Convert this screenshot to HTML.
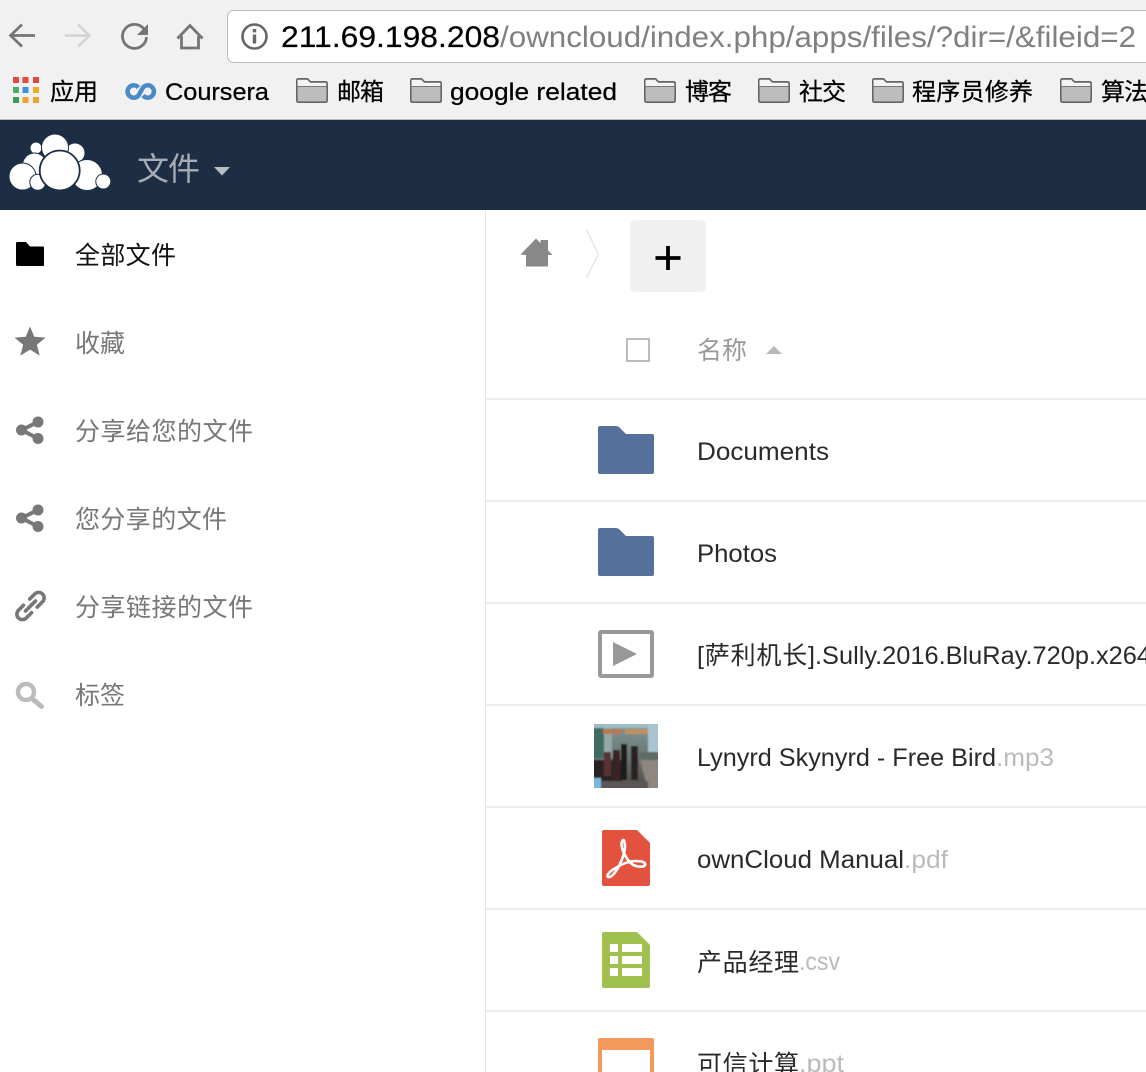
<!DOCTYPE html>
<html><head><meta charset="utf-8"><title>文件 - ownCloud</title>
<style>
html,body{margin:0;padding:0;background:#fff;width:1146px;height:1072px;overflow:hidden}
svg{display:block}
text{font-family:"Liberation Sans","Noto Sans CJK SC",sans-serif}
.bm{font-size:24px;fill:#000;stroke:#000;stroke-width:.25px}
.nav{font-size:25px;fill:#777}
.fn{font-size:25px;fill:#2a2a2a}
.ext{font-size:25px;fill:#bbb}
</style></head><body>
<svg width="1146" height="1072" viewBox="0 0 1146 1072" xmlns="http://www.w3.org/2000/svg">
<defs>
<linearGradient id="sky" x1="0" y1="0" x2="0" y2="1"><stop offset="0" stop-color="#7d9a9c"/><stop offset=".5" stop-color="#6c7672"/><stop offset="1" stop-color="#4a4440"/></linearGradient>
<filter id="soft" x="0" y="0" width="100%" height="100%"><feGaussianBlur stdDeviation=".7"/></filter>
<clipPath id="alb"><rect x="594" y="724" width="64" height="64"/></clipPath>
<g id="bf"><path d="M.8 2.500q0-1.700 1.700-1.700h9l3 3h15q1.700 0 1.700 1.700v17q0 1.700-1.700 1.700h-27q-1.700 0-1.700-1.700z" fill="#bdbdbd" stroke="#666" stroke-width="1.600"/><path d="M1.600 2h9.600l3 3h16v3.500H1.600z" fill="#f4f4f4"/><path d="M1.600 8.500h29" stroke="#777" stroke-width="1"/></g>
<path id="folder" d="M2 0h16q2 0 3.500 1.500L28 8h26q2 0 2 2v36q0 2-2 2H2q-2 0-2-2V2q0-2 2-2z"/>
<g id="share"><circle cx="5.500" cy="13" r="5.500"/><circle cx="22" cy="5" r="5.500"/><circle cx="22" cy="21.500" r="5.500"/><path d="M5.500 13L22 5M5.500 13L22 21.500" stroke="#777" stroke-width="4" fill="none"/></g>
</defs>

<rect width="1146" height="119" fill="#f1f1f1"/>
<rect y="119" width="1146" height="1" fill="#b9b9b9"/>
<rect y="120" width="1146" height="90" fill="#1d2d44"/>

<!-- browser controls -->
<path d="M35 35.500H11M22 24.500L10.500 35.500 22 46.500" fill="none" stroke="#757575" stroke-width="2.700"/>
<path d="M65 35.500H89M78 24.500L89.500 35.500 78 46.500" fill="none" stroke="#d4d4d4" stroke-width="2.700"/>
<path d="M144 29A12 12 0 1 0 146.500 37" fill="none" stroke="#757575" stroke-width="2.800"/>
<path d="M148 24V35H137z" fill="#757575"/>
<path d="M177.500 38.500L190 25.500l12.500 13M181.500 36v12h17V36" fill="none" stroke="#757575" stroke-width="2.800"/>
<rect x="227.500" y="10.500" width="960" height="52" rx="6" fill="#fff" stroke="#bcbcbc"/>
<circle cx="254.500" cy="36.500" r="12" fill="none" stroke="#666" stroke-width="2.600"/>
<rect x="252.800" y="34.500" width="3.400" height="9" fill="#666"/><rect x="252.800" y="29" width="3.400" height="3.400" fill="#666"/>
<text x="281" y="47" font-size="30" fill="#000" stroke="#000" stroke-width=".2" textLength="219" lengthAdjust="spacingAndGlyphs">211.69.198.208</text>
<text x="500" y="47" font-size="30" fill="#808080" textLength="636" lengthAdjust="spacingAndGlyphs">/owncloud/index.php/apps/files/?dir=/&amp;fileid=2</text>

<!-- bookmarks bar -->
<g>
<rect x="13" y="77" width="6" height="6" fill="#e04a3c"/><rect x="22.500" y="77" width="6" height="6" fill="#e04a3c"/><rect x="33" y="77" width="6" height="6" fill="#e04a3c"/>
<rect x="13" y="87" width="6" height="6" fill="#4cae62"/><rect x="22.500" y="87" width="6" height="6" fill="#3f8fe8"/><rect x="33" y="87" width="6" height="6" fill="#f5a623"/>
<rect x="13" y="97" width="6" height="6" fill="#3d9b58"/><rect x="22.500" y="97" width="6" height="6" fill="#f0a030"/><rect x="33" y="97" width="6" height="6" fill="#f0a030"/>
</g>
<text class="bm" x="50" y="100" textLength="48">应用</text>
<path d="M138.500 87.500A6.200 6.200 0 1 0 138.500 95.500L143 87.500A6.200 6.200 0 1 1 143 95.500" fill="none" stroke="#4a8ac9" stroke-width="4.500"/>
<text class="bm" x="165" y="100" textLength="104" lengthAdjust="spacingAndGlyphs">Coursera</text>
<use href="#bf" x="296" y="78"/><text class="bm" x="337" y="100" textLength="47">邮箱</text>
<use href="#bf" x="410" y="78"/><text class="bm" x="450" y="100" textLength="167" lengthAdjust="spacingAndGlyphs">google related</text>
<use href="#bf" x="644" y="78"/><text class="bm" x="685" y="100" textLength="47">博客</text>
<use href="#bf" x="758" y="78"/><text class="bm" x="799" y="100" textLength="47">社交</text>
<use href="#bf" x="872" y="78"/><text class="bm" x="912" y="100" textLength="121">程序员修养</text>
<use href="#bf" x="1060" y="78"/><text class="bm" x="1101" y="100" textLength="47">算法</text>

<!-- owncloud header -->
<g fill="#fff" stroke="#1d2d44" stroke-width="1">
<circle cx="36" cy="148" r="6"/><circle cx="75" cy="153" r="10"/><circle cx="55" cy="147.500" r="13.500"/>
<circle cx="34.500" cy="165" r="12"/><circle cx="22.500" cy="176.500" r="13.500"/><circle cx="87" cy="175" r="15.500"/><circle cx="103.300" cy="181.500" r="7.500"/><circle cx="37.800" cy="182.300" r="8"/>
<circle cx="59.700" cy="170.500" r="20" stroke-width="1.800"/>
</g>
<text x="137" y="180" font-size="32" fill="#a6acb5" textLength="63">文件</text>
<path d="M214 167h16l-8 8.500z" fill="#b8bcc3"/>

<!-- sidebar -->
<rect x="485" y="210" width="1" height="862" fill="#e6e6e6"/>
<path d="M16 243.500q0-1.500 1.500-1.500h8.500l4 4.500h13q1 0 1 1.500v17q0 1-1.500 1h-25q-1.500 0-1.500-1.500z" fill="#000"/>
<text x="75" y="264" font-size="25" fill="#111" textLength="101">全部文件</text>
<path d="M30 326.500l4.300 10.300 11.200.8-8.600 7.100 2.800 10.900-9.700-6-9.600 6 2.700-10.900-8.600-7.100 11.200-.8z" fill="#777"/>
<text class="nav" x="75" y="352" textLength="50">收藏</text>
<use href="#share" x="16" y="417" fill="#777"/>
<text class="nav" x="75" y="440" textLength="178">分享给您的文件</text>
<use href="#share" x="16" y="505" fill="#777"/>
<text class="nav" x="75" y="528" textLength="152">您分享的文件</text>
<g transform="rotate(-45 30.500 606)" fill="none" stroke="#777" stroke-width="3.600" stroke-linecap="round"><path d="M26 600.500H19a5.500 5.500 0 0 0 0 11H26.500"/><path d="M35 600.500H42a5.500 5.500 0 0 1 0 11H34.500"/><path d="M23.500 606H37.500"/></g>
<text class="nav" x="75" y="616" textLength="178">分享链接的文件</text>
<circle cx="26" cy="692" r="8" fill="none" stroke="#bbb" stroke-width="4.400"/><path d="M32 698.500l9.500 8" stroke="#bbb" stroke-width="5" stroke-linecap="round"/>
<text class="nav" x="75" y="704" textLength="50">标签</text>

<!-- breadcrumb -->
<path d="M520.500 254.500L536 238.500l4.500 4.500v-3h7.500v10.500l4.500 4.500h-4.500v11.500h-22v-11.500z" fill="#888"/>
<path d="M586.500 230l12 24-12 24" fill="none" stroke="#dcdcdc"/>
<rect x="630" y="220" width="76" height="72" rx="5" fill="#f0f0f0"/>
<path d="M668 246v24M655.500 258h25" stroke="#000" stroke-width="3.800"/>

<!-- table head -->
<rect x="627" y="339" width="22" height="22" fill="#fff" stroke="#bbb" stroke-width="2"/>
<text x="697" y="359" font-size="25" fill="#999" textLength="50">名称</text>
<path d="M766 354l8-8 8 8z" fill="#b8b8b8"/>

<!-- rows -->
<g fill="#eee"><rect x="486" y="398" width="660" height="2"/><rect x="486" y="500" width="660" height="2"/><rect x="486" y="602" width="660" height="2"/><rect x="486" y="704" width="660" height="2"/><rect x="486" y="806" width="660" height="2"/><rect x="486" y="908" width="660" height="2"/><rect x="486" y="1010" width="660" height="2"/></g>

<use href="#folder" x="598" y="426" fill="#55709a"/>
<text class="fn" x="697" y="460" textLength="132" lengthAdjust="spacingAndGlyphs">Documents</text>
<use href="#folder" x="598" y="528" fill="#55709a"/>
<text class="fn" x="697" y="562" textLength="80" lengthAdjust="spacingAndGlyphs">Photos</text>

<rect x="600" y="632" width="52" height="44" fill="#fff" stroke="#999" stroke-width="4" rx="1"/>
<path d="M613 642l24 12-24 12z" fill="#999"/>
<text class="fn" x="697" y="664" font-size="26" textLength="118">[萨利机长]</text>
<text class="fn" x="815" y="664" textLength="336" lengthAdjust="spacingAndGlyphs">.Sully.2016.BluRay.720p.x264</text>

<!-- album -->
<g clip-path="url(#alb)"><g filter="url(#soft)">
<rect x="592" y="722" width="68" height="68" fill="url(#sky)"/>
<rect x="592" y="722" width="68" height="6" fill="#9cbdc8"/>
<rect x="592" y="728" width="12" height="30" fill="#3f6a62"/>
<rect x="604" y="728" width="8" height="30" fill="#93a8a8"/>
<rect x="603" y="729" width="19" height="5" fill="#b57a50"/><rect x="625" y="729" width="25" height="5" fill="#c09060"/>
<rect x="648" y="724" width="12" height="28" fill="#a8c4d0"/>
<rect x="640" y="752" width="20" height="8" fill="#5f6a66"/>
<rect x="592" y="760" width="30" height="24" fill="#2a2024"/>
<rect x="621" y="744" width="6" height="36" fill="#1e1a1c"/><rect x="631" y="746" width="7" height="34" fill="#2a2220"/><rect x="613" y="750" width="7" height="30" fill="#3a2428"/><rect x="604" y="752" width="7" height="24" fill="#5a3034"/>
<path d="M640 760h20v30h-12z" fill="#8d8780"/>
<rect x="592" y="781" width="56" height="9" fill="#5a5654"/><rect x="592" y="778" width="9" height="12" fill="#78b8d8"/>
</g></g>
<text class="fn" x="697" y="766" textLength="299" lengthAdjust="spacingAndGlyphs">Lynyrd Skynyrd - Free Bird</text>
<text class="ext" x="996" y="766" textLength="58" lengthAdjust="spacingAndGlyphs">.mp3</text>

<path d="M604 830h33l13 13v41q0 2-2 2h-44q-2 0-2-2v-52q0-2 2-2z" fill="#e2523f"/>
<path d="M623 840c-3 3-1 10 2 15 3 6 7 10 11 11 4 1 8 1 9-1 1-3-4-4-9-4-8 0-16 4-22 8-5 3-8 7-6 8 3 1 7-4 10-9 3-6 7-15 7-21 0-4-1-8-2-7z" fill="none" stroke="#fff" stroke-width="2.600"/>
<text class="fn" x="697" y="868" textLength="207" lengthAdjust="spacingAndGlyphs">ownCloud Manual</text>
<text class="ext" x="904" y="868" textLength="44" lengthAdjust="spacingAndGlyphs">.pdf</text>

<path d="M604 932h33l13 13v41q0 2-2 2h-44q-2 0-2-2v-52q0-2 2-2z" fill="#a0c14f"/>
<g fill="#fff"><rect x="610" y="944" width="8" height="8"/><rect x="622" y="944" width="20" height="8"/><rect x="610" y="956" width="8" height="8"/><rect x="622" y="956" width="20" height="8"/><rect x="610" y="968" width="8" height="8"/><rect x="622" y="968" width="20" height="8"/></g>
<text class="fn" x="697" y="971" textLength="102">产品经理</text>
<text class="ext" x="799" y="970" textLength="41" lengthAdjust="spacingAndGlyphs">.csv</text>

<rect x="600" y="1040" width="52" height="50" fill="#fff" stroke="#f4995c" stroke-width="4" rx="1"/>
<rect x="598" y="1038" width="56" height="12" rx="2" fill="#f4995c"/>
<text class="fn" x="697" y="1073" textLength="102">可信计算</text>
<text class="ext" x="799" y="1072" textLength="45" lengthAdjust="spacingAndGlyphs">.ppt</text>
</svg>
</body></html>
